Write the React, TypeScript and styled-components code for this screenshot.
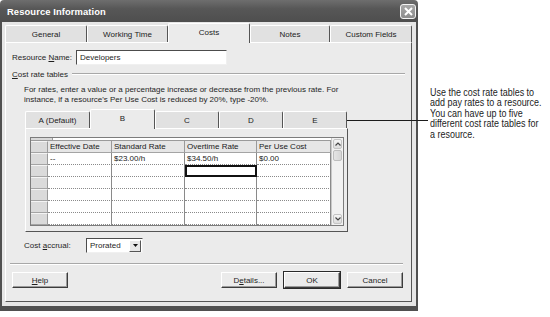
import React from 'react';
import styled, { createGlobalStyle } from 'styled-components';

const Global = createGlobalStyle`
  html, body { margin: 0; padding: 0; background: #fff; }
  body { font-family: "Liberation Sans", Arial, sans-serif; }
  #root { width: 550px; height: 317px; }
`;

const Stage = styled.div`
  position: relative;
  width: 550px;
  height: 317px;
  display: flex;
  align-items: flex-start;
  background: #fff;
  overflow: hidden;
`;

const Window = styled.div`
  width: 418px;
  display: flex;
  flex-direction: column;
  flex: none;
`;

const TitleBar = styled.div`
  height: 22px;
  box-sizing: border-box;
  background: linear-gradient(#6e6e6e, #575757 40%, #4e4e4e);
  border-radius: 4px 4px 0 0;
  display: flex;
  align-items: center;
  justify-content: space-between;
  padding: 0 2px 0 7px;
  color: #fff;
  font-weight: bold;
  font-size: 9.4px;
  letter-spacing: 0.1px;
`;

const CloseBtn = styled.div`
  width: 16px;
  height: 15px;
  box-sizing: border-box;
  border: 1px solid #f4f4f4;
  border-radius: 3px;
  background: linear-gradient(#a8a8a8, #8c8c8c);
  display: flex;
  align-items: center;
  justify-content: center;
  margin-top: 1px;
`;

const Frame = styled.div`
  background: #e6e6e6;
  border-left: 2px solid #505050;
  border-right: 2px solid #505050;
  border-bottom: 5px solid #505050;
  padding: 3px 4px 4px 3px;
  display: flex;
  flex-direction: column;
`;

const TabStrip = styled.div`
  display: flex;
  align-items: flex-end;
  height: 17px;
  position: relative;
  z-index: 1;
`;

const Tab = styled.div<{ $w: number; $active?: boolean }>`
  width: ${p => p.$w}px;
  height: ${p => (p.$active ? 20 : 17)}px;
  margin-bottom: ${p => (p.$active ? -1 : 0)}px;
  box-sizing: border-box;
  border-top: 1px solid #fff;
  border-left: 1px solid #fff;
  border-right: 1px solid #555;
  border-radius: 2px 2px 0 0;
  background: ${p => (p.$active ? '#ebebeb' : '#e1e1e1')};
  display: flex;
  align-items: center;
  justify-content: center;
  padding-bottom: ${p => (p.$active ? 2 : 0)}px;
  font-size: 8px;
  color: #222;
`;

const Page = styled.div`
  height: 260px;
  box-sizing: border-box;
  background: #ebebeb;
  border-top: 1px solid #fff;
  border-left: 1px solid #fff;
  border-right: 1px solid #555;
  border-bottom: 1px solid #555;
  padding: 7px 8px 0 6px;
  display: flex;
  flex-direction: column;
  font-size: 8px;
  color: #1e1e1e;
`;

const FieldRow = styled.div<{ $top?: number; $indent?: number }>`
  display: flex;
  align-items: center;
  margin-top: ${p => p.$top ?? 0}px;
  margin-left: ${p => p.$indent ?? 0}px;
`;

const Label = styled.div<{ $w: number }>`
  width: ${p => p.$w}px;
  flex: none;
  white-space: nowrap;
`;

const TextInput = styled.div`
  width: 151px;
  height: 15px;
  box-sizing: border-box;
  background: #fff;
  border-top: 1px solid #4c4c4c;
  border-left: 1px solid #4c4c4c;
  border-right: 1px solid #f0f0f0;
  border-bottom: 1px solid #f0f0f0;
  padding-left: 3px;
  display: flex;
  align-items: center;
  font-size: 8px;
`;

const GroupHead = styled.div`
  display: flex;
  align-items: center;
  height: 12px;
  margin-top: 3px;
  margin-right: -2px;
`;

const GroupLine = styled.div`
  flex: 1;
  margin-left: 4px;
  border-top: 1px solid #a8a8a8;
  border-bottom: 1px solid #fff;
`;

const Para = styled.div`
  margin: 5px 0 0 12px;
  line-height: 10px;
  white-space: nowrap;
`;

const InnerPanel = styled.div`
  width: 323px;
  height: 104px;
  box-sizing: border-box;
  margin-left: 13px;
  background: #ebebeb;
  border-top: 1px solid #fff;
  border-left: 1px solid #fff;
  border-right: 1px solid #555;
  border-bottom: 1px solid #555;
  padding: 8px 0 0 4px;
`;

const Grid = styled.div`
  width: 314px;
  height: 89px;
  box-sizing: border-box;
  border: 1px solid #7c7c7c;
  display: flex;
  background: #fff;
  overflow: hidden;
`;

const Sheet = styled.div`
  width: 300px;
  display: flex;
  flex-direction: column;
`;

const EntryBar = styled.div`
  height: 10px;
  display: flex;
  border-bottom: 1px solid #9a9a9a;
`;

const EntryCell = styled.div`
  width: 21px;
  background: #d9d9d9;
  border-right: 1px solid #9a9a9a;
`;

const GridRow = styled.div<{ $h: number }>`
  height: ${p => p.$h}px;
  display: flex;
  flex: none;
`;

const Cell = styled.div<{ $w: number; $kind: 'rowhead' | 'head' | 'data'; $sel?: boolean }>`
  width: ${p => p.$w}px;
  flex: none;
  box-sizing: border-box;
  position: relative;
  padding-left: 2px;
  display: flex;
  align-items: center;
  white-space: nowrap;
  overflow: hidden;
  font-size: 8px;
  color: #1a1a1a;
  background: ${p => (p.$kind === 'data' ? '#fff' : p.$kind === 'head' ? '#e6e6e6' : '#dadada')};
  border-right: 1px solid ${p => (p.$kind === 'data' ? '#8a8a8a' : '#9a9a9a')};
  border-bottom: 1px ${p => (p.$kind === 'data' ? 'dotted #8a8a8a' : 'solid #a4a4a4')};
  ${p => (p.$kind === 'rowhead' ? 'border-top: 1px solid #f4f4f4;' : '')}
  ${p => (p.$sel ? 'outline: 2px solid #111; outline-offset: -2px;' : '')}
`;

const ScrollBar = styled.div`
  width: 12px;
  display: flex;
  flex-direction: column;
  background: #f1f1f1;
  border-left: 1px solid #c8c8c8;
  padding: 1px 0;
  box-sizing: border-box;
`;

const ScrollBtn = styled.div`
  height: 10px;
  margin: 0 1px;
  box-sizing: border-box;
  border: 1px solid #c4c4c4;
  border-radius: 2px;
  background: linear-gradient(#f6f6f6, #dcdcdc);
  display: flex;
  align-items: center;
  justify-content: center;
`;

const Thumb = styled.div`
  height: 11px;
  margin: 1px 1px 0;
  box-sizing: border-box;
  border: 1px solid #bdbdbd;
  border-radius: 2px;
  background: linear-gradient(90deg, #e4e4e4, #d6d6d6);
`;

const Track = styled.div`
  flex: 1;
`;

const Select = styled.div`
  width: 57px;
  height: 15px;
  box-sizing: border-box;
  background: #fff;
  border-top: 1px solid #4c4c4c;
  border-left: 1px solid #4c4c4c;
  border-right: 1px solid #f0f0f0;
  border-bottom: 1px solid #f0f0f0;
  display: flex;
  align-items: center;
  padding-left: 3px;
`;

const SelectText = styled.div`
  flex: 1;
`;

const DropBtn = styled.div`
  width: 12px;
  height: 12px;
  margin-right: 1px;
  box-sizing: border-box;
  background: #e8e8e8;
  border-top: 1px solid #fff;
  border-left: 1px solid #fff;
  border-right: 1px solid #555;
  border-bottom: 1px solid #555;
  display: flex;
  align-items: center;
  justify-content: center;
`;

const Separator = styled.div`
  margin: 10px 0 0 -2px;
  border-top: 1px solid #a8a8a8;
  border-bottom: 1px solid #fff;
`;

const ButtonRow = styled.div`
  display: flex;
  gap: 7px;
  margin-top: 7px;
`;

const Spacer = styled.div`
  flex: 1;
`;

const Button = styled.div<{ $default?: boolean }>`
  width: 56px;
  height: 16px;
  box-sizing: border-box;
  background: #ebebeb;
  border-top: 1px solid #fff;
  border-left: 1px solid #fff;
  border-right: 1px solid #3c3c3c;
  border-bottom: 1px solid #3c3c3c;
  box-shadow: inset -1px -1px 0 #9a9a9a${p => (p.$default ? ', 0 0 0 1px #2a2a2a' : '')};
  display: flex;
  align-items: center;
  justify-content: center;
  font-size: 8px;
  color: #1e1e1e;
`;

const NoteColumn = styled.div`
  padding: 88px 0 0 12px;
  width: 120px;
  flex: none;
`;

const Note = styled.div`
  font-family: "Liberation Sans", Arial, sans-serif;
  font-size: 10.3px;
  line-height: 10.4px;
  color: #1c1c1c;
  white-space: nowrap;
  transform: scaleX(0.87);
  transform-origin: left top;
`;

const Callout = styled.div`
  position: absolute;
  left: 338px;
  top: 120px;
  width: 90px;
  height: 1px;
  background: #1c1c1c;
`;

const U = styled.span`
  text-decoration: underline;
`;

const columns = [
  { w: 64, label: 'Effective Date' },
  { w: 73, label: 'Standard Rate' },
  { w: 72, label: 'Overtime Rate' },
  { w: 74, label: 'Per Use Cost' },
];

const rows: { vals: string[]; sel?: number }[] = [
  { vals: ['--', '$23.00/h', '$34.50/h', '$0.00'] },
  { vals: ['', '', '', ''], sel: 2 },
  { vals: ['', '', '', ''] },
  { vals: ['', '', '', ''] },
  { vals: ['', '', '', ''] },
  { vals: ['', '', '', ''] },
];

const mainTabs = [
  { w: 82, label: 'General' },
  { w: 81, label: 'Working Time' },
  { w: 82, label: 'Costs', active: true },
  { w: 80, label: 'Notes' },
  { w: 82, label: 'Custom Fields' },
];

const rateTabs = [
  { w: 65, label: 'A (Default)' },
  { w: 65, label: 'B', active: true },
  { w: 64, label: 'C' },
  { w: 64, label: 'D' },
  { w: 64, label: 'E' },
];

const Arrow = ({ up }: { up?: boolean }) => (
  <svg width="6" height="4" viewBox="0 0 6 4">
    <path d={up ? 'M0.5 3.5 L3 1 L5.5 3.5' : 'M0.5 0.5 L3 3 L5.5 0.5'} fill="none" stroke="#444" strokeWidth="1.2" />
  </svg>
);

export default function App() {
  return (
    <Stage>
      <Global />
      <Window>
        <TitleBar>
          <span>Resource Information</span>
          <CloseBtn>
            <svg width="9" height="9" viewBox="0 0 9 9">
              <path d="M1 1 L8 8 M8 1 L1 8" stroke="#fff" strokeWidth="2" />
            </svg>
          </CloseBtn>
        </TitleBar>
        <Frame>
          <TabStrip>
            {mainTabs.map(t => (
              <Tab key={t.label} $w={t.w} $active={t.active}>{t.label}</Tab>
            ))}
          </TabStrip>
          <Page>
            <FieldRow>
              <Label $w={64}>Resource <U>N</U>ame:</Label>
              <TextInput>Developers</TextInput>
            </FieldRow>
            <GroupHead>
              <span><U>C</U>ost rate tables</span>
              <GroupLine />
            </GroupHead>
            <Para>
              For rates, enter a value or a percentage increase or decrease from the previous rate. For
              <br />
              instance, if a resource's Per Use Cost is reduced by 20%, type -20%.
            </Para>
            <FieldRow $top={6} $indent={13}>
              <TabStrip>
                {rateTabs.map(t => (
                  <Tab key={t.label} $w={t.w} $active={t.active}>{t.label}</Tab>
                ))}
              </TabStrip>
            </FieldRow>
            <InnerPanel>
              <Grid>
                <Sheet>
                  <EntryBar>
                    <EntryCell />
                  </EntryBar>
                  <GridRow $h={12}>
                    <Cell $w={17} $kind="rowhead" />
                    {columns.map(c => (
                      <Cell key={c.label} $w={c.w} $kind="head">{c.label}</Cell>
                    ))}
                  </GridRow>
                  {rows.map((r, i) => (
                    <GridRow key={i} $h={12}>
                      <Cell $w={17} $kind="rowhead" />
                      {columns.map((c, j) => (
                        <Cell key={c.label} $w={c.w} $kind="data" $sel={r.sel === j}>{r.vals[j]}</Cell>
                      ))}
                    </GridRow>
                  ))}
                </Sheet>
                <ScrollBar>
                  <ScrollBtn><Arrow up /></ScrollBtn>
                  <Thumb />
                  <Track />
                  <ScrollBtn><Arrow /></ScrollBtn>
                </ScrollBar>
              </Grid>
            </InnerPanel>
            <FieldRow $top={6} $indent={12}>
              <Label $w={62}>Cost <U>a</U>ccrual:</Label>
              <Select>
                <SelectText>Prorated</SelectText>
                <DropBtn>
                  <svg width="5" height="3" viewBox="0 0 5 3"><path d="M0 0 H5 L2.5 3 Z" fill="#111" /></svg>
                </DropBtn>
              </Select>
            </FieldRow>
            <Separator />
            <ButtonRow>
              <Button><U>H</U>elp</Button>
              <Spacer />
              <Button>D<U>e</U>tails...</Button>
              <Button $default>OK</Button>
              <Button>Cancel</Button>
            </ButtonRow>
          </Page>
        </Frame>
      </Window>
      <NoteColumn>
        <Note>
          Use the cost rate tables to
          <br />
          add pay rates to a resource.
          <br />
          You can have up to five
          <br />
          different cost rate tables for
          <br />
          a resource.
        </Note>
      </NoteColumn>
      <Callout />
    </Stage>
  );
}
